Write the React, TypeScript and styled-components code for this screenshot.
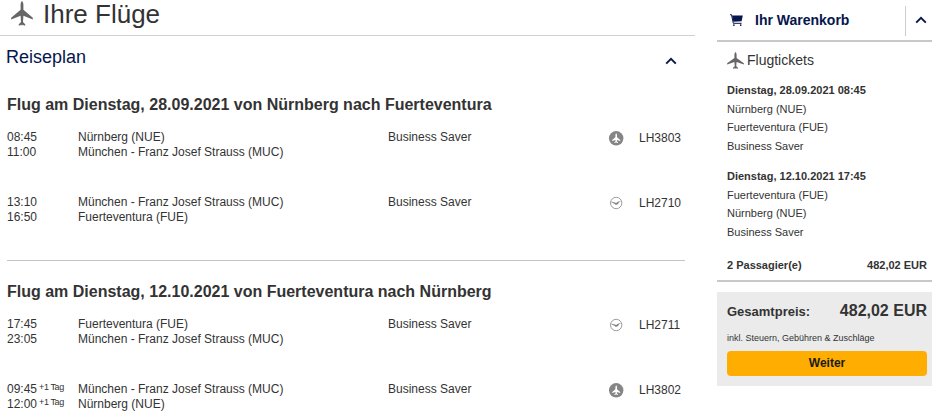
import React from 'react';
import styled, { createGlobalStyle } from 'styled-components';

const GlobalStyle = createGlobalStyle`
  * { box-sizing: border-box; }
  body {
    margin: 0;
    background: #fff;
    color: #333;
    font-family: "Liberation Sans", Arial, sans-serif;
    font-size: 12px;
    overflow: hidden;
  }
  h1, h2, h3, p { margin: 0; }
  svg { display: block; flex: none; }
`;

const Page = styled.div`
  display: flex;
  align-items: flex-start;
  width: 932px;
  height: 416px;
  overflow: hidden;
`;

const Main = styled.main`
  width: 695px;
  flex: none;
`;

const TitleBar = styled.header`
  display: flex;
  height: 36px;
  padding: 1px 0 0 11px;
  border-bottom: 1px solid #d0d0d0;
`;

const Title = styled.h1`
  margin-left: 10px;
  font-size: 26px;
  font-weight: 400;
  line-height: 27px;
`;

const PlanBar = styled.div`
  display: flex;
  justify-content: space-between;
  height: 57px;
  padding: 10px 18px 0 6px;
  svg { margin-top: 11px; }
`;

const PlanTitle = styled.h2`
  color: #05164d;
  font-size: 18px;
  font-weight: 400;
  line-height: 22px;
`;

const Journey = styled.section`
  margin: 0 10px 0 7px;
  height: 168px;
  padding-top: 1px;
  border-bottom: 1px solid #c4c4c4;
  & + & {
    margin-top: 19px;
    border-bottom: 0;
  }
`;

const JourneyTitle = styled.h3`
  font-size: 16px;
  line-height: 22px;
  margin-bottom: 14px;
`;

const Leg = styled.div`
  display: grid;
  grid-template-columns: 71px 310px 221px 30px auto;
  height: 65px;
  line-height: 15px;
`;

const Flight = styled.span`
  padding-top: 1px;
`;

const CarrierIcon = styled.span`
  padding-top: 1px;
`;

const DayShift = styled.sup`
  margin-left: 2px;
  font-size: 9px;
  letter-spacing: -0.4px;
  line-height: 1;
  vertical-align: 3px;
`;

const Cart = styled.aside`
  width: 215px;
  margin-left: 22px;
`;

const CartHeader = styled.div`
  display: flex;
  height: 42px;
  padding: 6px 0 4px 13px;
  border-bottom: 2px solid #c8c8c8;
  > svg { margin-top: 8px; }
`;

const CartTitle = styled.h2`
  flex: 1;
  margin-left: 12px;
  color: #05164d;
  font-size: 14px;
  line-height: 28px;
`;

const CartToggle = styled.div`
  width: 27px;
  height: 30px;
  padding: 10px 0 0 9px;
  border-left: 1px solid #ccc;
`;

const CartBody = styled.div`
  height: 240px;
  padding: 10px 5px 0 10px;
  border-bottom: 2px solid #c8c8c8;
  font-size: 11px;
`;

const TicketHeading = styled.div`
  display: flex;
  align-items: flex-start;
  gap: 3px;
  height: 29px;
  font-size: 14px;
  line-height: 17px;
`;

const Ticket = styled.div`
  height: 86px;
  line-height: 18.6px;
`;

const SumRow = styled.div`
  display: flex;
  justify-content: space-between;
  align-items: baseline;
  font-weight: 700;
  padding-top: 4px;
  line-height: 17px;
`;

const Total = styled.section`
  margin-top: 10px;
  height: 94px;
  padding: 9px 5px 0 10px;
  background: #ebebeb;
`;

const TotalRow = styled.div`
  display: flex;
  justify-content: space-between;
  align-items: baseline;
  font-size: 13px;
  font-weight: 700;
  line-height: 20px;
`;

const TotalAmount = styled.span`
  font-size: 16px;
`;

const TaxNote = styled.p`
  margin-top: 8px;
  font-size: 9px;
  line-height: 16px;
`;

const NextButton = styled.button`
  display: block;
  width: 200px;
  height: 25px;
  margin-top: 5px;
  padding: 0 0 1px;
  border: 0;
  border-radius: 4px;
  background: #ffad00;
  color: #1a1a1a;
  font: 700 12px/24px "Liberation Sans", Arial, sans-serif;
`;

function Plane({ width, height }: { width: number; height: number }) {
  return (
    <svg width={width} height={height} viewBox="0 0 22 24" preserveAspectRatio="none" fill="#666">
      <path d="M11 0C12 1 12.4 2.2 12.4 3.6V8.4L21.8 16V17.8L12.4 14.2 12 20.2 14.2 22.4V23.8L11.5 22.8 11 24 10.5 22.8 7.8 23.8V22.4L10 20.2 9.6 14.2.2 17.8V16L9.6 8.4V3.6C9.6 2.2 10 1 11 0Z" />
    </svg>
  );
}

function Chevron() {
  return (
    <svg width="12" height="8" viewBox="0 0 12 8" fill="none" stroke="#05164d" strokeWidth="1.9">
      <path d="M1.2 6.6 6 1.8 10.8 6.6" />
    </svg>
  );
}

function CartIcon() {
  return (
    <svg width="13" height="13" viewBox="0 0 13 13">
      <path d="M0 .7H1.5L3.3 9.3H11.6" fill="none" stroke="#05164d" strokeWidth="1" />
      <path d="M2 1.6H12.8L11.6 7.2 3.4 7.8Z" fill="#05164d" />
      <circle cx="3.9" cy="11.1" r=".9" fill="#05164d" />
      <circle cx="10.7" cy="11.1" r=".9" fill="#05164d" />
    </svg>
  );
}

function CityLine() {
  return (
    <svg width="15" height="15" viewBox="0 0 15 15">
      <circle cx="7.2" cy="7.3" r="7.2" fill="#858585" />
      <path d="M7.2 2.3C7.8 2.9 8 3.5 8 4.3V6.2L11.2 9V9.9L8 8.9 7.8 10.3 9 11.3V12L7.5 11.5H6.9L5.4 12V11.3L6.6 10.3 6.4 8.9 3.2 9.9V9L6.4 6.2V4.3C6.4 3.5 6.6 2.9 7.2 2.3Z" fill="#fff" />
    </svg>
  );
}

function Crane() {
  return (
    <svg width="15" height="15" viewBox="0 0 15 15">
      <circle cx="7.2" cy="7" r="5.7" fill="#fff" stroke="#929292" strokeWidth="0.9" />
      <path d="M2.2 5.6 5.6 6.5 7.2 7 8.9 5.7 12.4 4.9 9.8 6.5 9 7.9 7.4 8.8 5.7 8.5 6.2 7.9 4.2 7.5 4.9 7.2 2.7 6.5Z" fill="#808080" />
    </svg>
  );
}

type LegData = {
  times: [string, string];
  places: [string, string];
  flight: string;
  carrier: 'city' | 'crane';
  nextDay?: boolean;
};

const NUE = 'Nürnberg (NUE)';
const MUC = 'München - Franz Josef Strauss (MUC)';
const FUE = 'Fuerteventura (FUE)';

const journeys: { title: string; legs: LegData[] }[] = [
  {
    title: 'Flug am Dienstag, 28.09.2021 von Nürnberg nach Fuerteventura',
    legs: [
      { times: ['08:45', '11:00'], places: [NUE, MUC], flight: 'LH3803', carrier: 'city' },
      { times: ['13:10', '16:50'], places: [MUC, FUE], flight: 'LH2710', carrier: 'crane' },
    ],
  },
  {
    title: 'Flug am Dienstag, 12.10.2021 von Fuerteventura nach Nürnberg',
    legs: [
      { times: ['17:45', '23:05'], places: [FUE, MUC], flight: 'LH2711', carrier: 'crane' },
      { times: ['09:45', '12:00'], places: [MUC, NUE], flight: 'LH3802', carrier: 'city', nextDay: true },
    ],
  },
];

const tickets = [
  { date: 'Dienstag, 28.09.2021 08:45', from: NUE, to: FUE },
  { date: 'Dienstag, 12.10.2021 17:45', from: FUE, to: NUE },
];

export default function App() {
  return (
    <>
      <GlobalStyle />
      <Page>
        <Main>
          <TitleBar>
            <Plane width={22} height={25} />
            <Title>Ihre Flüge</Title>
          </TitleBar>
          <PlanBar>
            <PlanTitle>Reiseplan</PlanTitle>
            <Chevron />
          </PlanBar>
          {journeys.map((journey) => (
            <Journey key={journey.title}>
              <JourneyTitle>{journey.title}</JourneyTitle>
              {journey.legs.map((leg) => (
                <Leg key={leg.flight}>
                  <div>
                    {leg.times.map((time) => (
                      <div key={time}>
                        {time}
                        {leg.nextDay && <DayShift>+1 Tag</DayShift>}
                      </div>
                    ))}
                  </div>
                  <div>
                    {leg.places.map((place) => (
                      <div key={place}>{place}</div>
                    ))}
                  </div>
                  <div>Business Saver</div>
                  <CarrierIcon>{leg.carrier === 'city' ? <CityLine /> : <Crane />}</CarrierIcon>
                  <Flight>{leg.flight}</Flight>
                </Leg>
              ))}
            </Journey>
          ))}
        </Main>
        <Cart>
          <CartHeader>
            <CartIcon />
            <CartTitle>Ihr Warenkorb</CartTitle>
            <CartToggle>
              <Chevron />
            </CartToggle>
          </CartHeader>
          <CartBody>
            <TicketHeading>
              <Plane width={17} height={17} />
              Flugtickets
            </TicketHeading>
            {tickets.map((ticket) => (
              <Ticket key={ticket.date}>
                <strong>{ticket.date}</strong>
                <div>{ticket.from}</div>
                <div>{ticket.to}</div>
                <div>Business Saver</div>
              </Ticket>
            ))}
            <SumRow>
              <span>2 Passagier(e)</span>
              <span>482,02 EUR</span>
            </SumRow>
          </CartBody>
          <Total>
            <TotalRow>
              <span>Gesamtpreis:</span>
              <TotalAmount>482,02 EUR</TotalAmount>
            </TotalRow>
            <TaxNote>inkl. Steuern, Gebühren &amp; Zuschläge</TaxNote>
            <NextButton>Weiter</NextButton>
          </Total>
        </Cart>
      </Page>
    </>
  );
}
